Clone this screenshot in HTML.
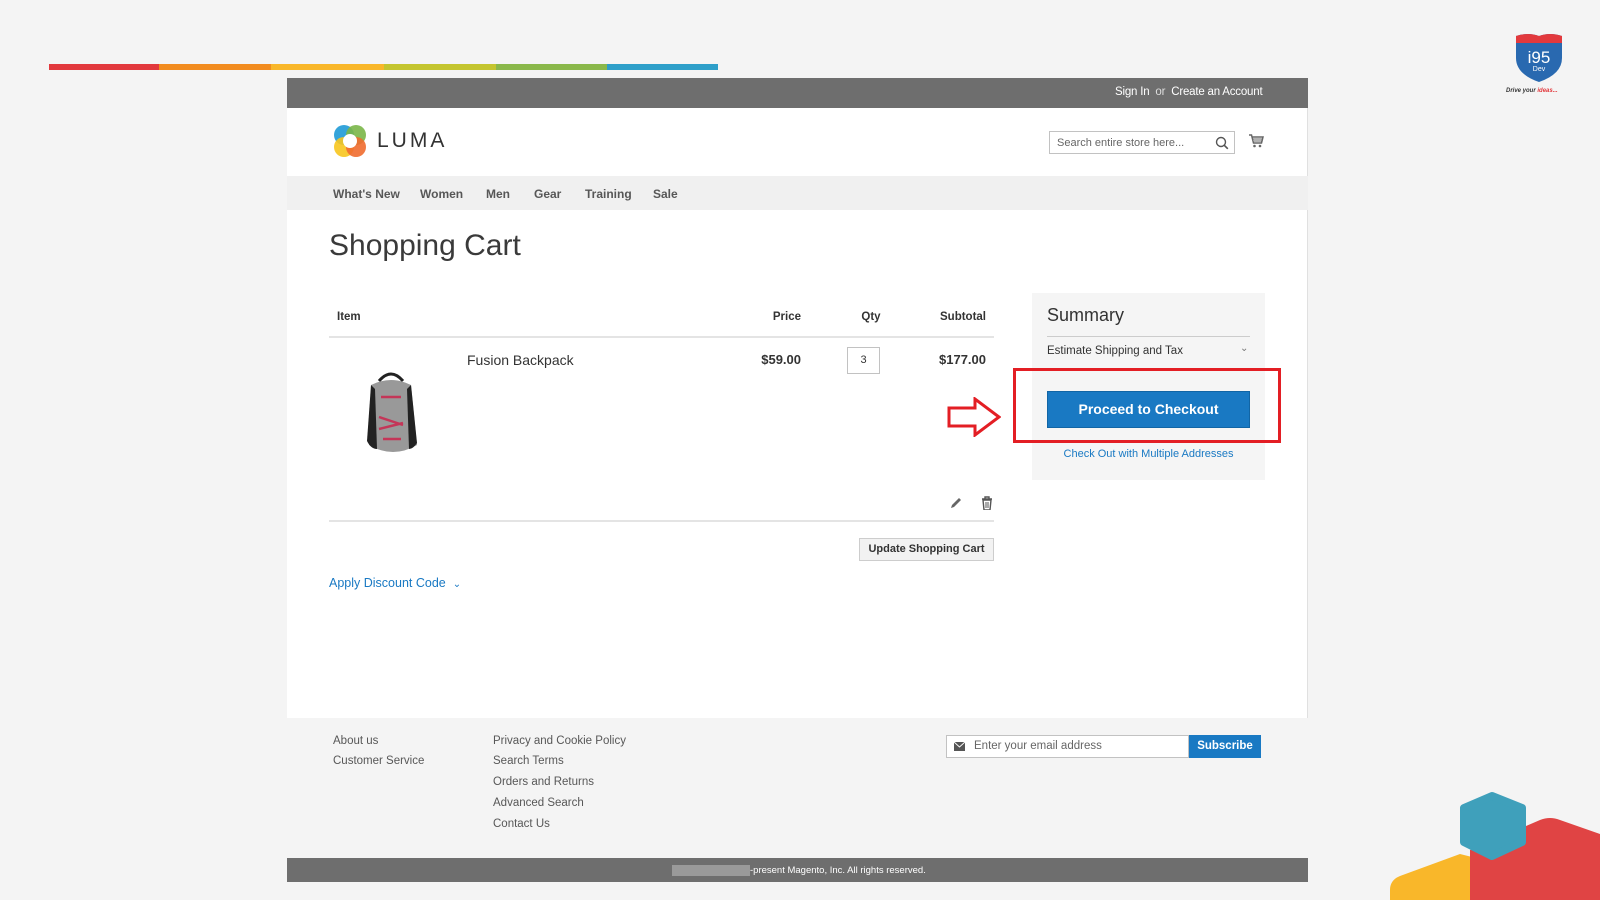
<!DOCTYPE html>
<html><head><meta charset="utf-8"><style>
*{margin:0;padding:0;box-sizing:border-box}
body{width:1600px;height:900px;background:#f4f4f4;font-family:"Liberation Sans",sans-serif;position:relative;overflow:hidden;color:#333}
.a{position:absolute}
.bar span{position:absolute;top:64px;height:6px}
.panel{left:287px;top:78px;width:1021px;height:804px;background:#fff;border-right:1px solid #e0e0e0}
.nav{font-size:12px;font-weight:bold;color:#575757;top:187px}
.ft{font-size:11.5px;color:#575757}
</style></head><body>
<div class="bar">
<span style="left:49px;width:110px;background:#e2393d"></span>
<span style="left:159px;width:112px;background:#f28c1f"></span>
<span style="left:271px;width:113px;background:#f9b72a"></span>
<span style="left:384px;width:112px;background:#c4c52f"></span>
<span style="left:496px;width:111px;background:#8ab84b"></span>
<span style="left:607px;width:111px;background:#2e9fc9"></span>
</div>
<div class="a panel"></div>
<div class="a" style="left:287px;top:78px;width:1021px;height:30px;background:#6e6e6e"></div>
<div class="a" style="left:1115px;top:86px;font-size:11.5px;color:#fff;letter-spacing:-0.2px">Sign In &nbsp;<span style="color:#ddd">or</span> &nbsp;Create an Account</div>
<svg class="a" style="left:333px;top:124px" width="34" height="34" viewBox="0 0 34 34">
<circle cx="11" cy="11" r="10" fill="#1f9ad6" opacity=".9"/><circle cx="23" cy="11" r="10" fill="#7ab648" opacity=".9"/>
<circle cx="11" cy="23" r="10" fill="#f7c51e" opacity=".9"/><circle cx="23" cy="23" r="10" fill="#ef6b2f" opacity=".9"/>
<circle cx="17" cy="17" r="7" fill="#fff"/></svg>
<div class="a" style="left:377px;top:129px;font-size:21px;letter-spacing:3px;color:#333">LUMA</div>
<div class="a" style="left:1049px;top:131px;width:186px;height:23px;border:1px solid #c2c2c2;font-size:11px;color:#666;padding:5px 7px">Search entire store here...</div>
<svg class="a" style="left:1215px;top:136px" width="14" height="14" viewBox="0 0 14 14"><circle cx="6" cy="6" r="4.5" fill="none" stroke="#555" stroke-width="1.4"/><path d="M9.3 9.3l3.5 3.5" stroke="#555" stroke-width="1.6"/></svg>
<svg class="a" style="left:1248px;top:133px" width="16" height="16" viewBox="0 0 16 16"><path d="M1 2h2.5l2 8h8l1.5-6H4" fill="none" stroke="#666" stroke-width="1.5"/><path d="M5 6h9M6 8h8" stroke="#666"/><circle cx="6.5" cy="13" r="1.3" fill="#666"/><circle cx="12" cy="13" r="1.3" fill="#666"/></svg>
<div class="a" style="left:287px;top:176px;width:1021px;height:34px;background:#f0f0f0"></div>
<div class="a nav" style="left:333px">What's New</div><div class="a nav" style="left:420px">Women</div>
<div class="a nav" style="left:486px">Men</div><div class="a nav" style="left:534px">Gear</div>
<div class="a nav" style="left:585px">Training</div><div class="a nav" style="left:653px">Sale</div>
<div class="a" style="left:329px;top:229px;font-size:30px;font-weight:300;color:#3a3a3a">Shopping Cart</div>
<div class="a" style="left:337px;top:311px;font-size:11.5px;font-weight:bold">Item</div>
<div class="a" style="left:741px;width:60px;text-align:right;top:311px;font-size:11.5px;font-weight:bold">Price</div>
<div class="a" style="left:851px;width:40px;text-align:center;top:311px;font-size:11.5px;font-weight:bold">Qty</div>
<div class="a" style="left:906px;width:80px;text-align:right;top:311px;font-size:11.5px;font-weight:bold">Subtotal</div>
<div class="a" style="left:329px;top:336px;width:665px;height:2px;background:#e4e4e4"></div>
<svg class="a" style="left:357px;top:367px" width="68" height="94" viewBox="0 0 68 94">
<path d="M22 14q12-14 24 0" fill="none" stroke="#222" stroke-width="3"/>
<path d="M14 18q20-10 40 0l6 60q-24 14-48 0z" fill="#999"/><path d="M14 18l-4 56q4 8 10 8l-2-60z" fill="#222"/><path d="M54 18l6 58q-4 6-8 6l-2-60z" fill="#222"/>
<path d="M24 30l20 0M22 50l24 8M22 62l24-6M26 72l18 0" stroke="#c43658" stroke-width="2.5" fill="none"/></svg>
<div class="a" style="left:467px;top:352px;font-size:14px;color:#333">Fusion Backpack</div>
<div class="a" style="left:721px;width:80px;text-align:right;top:352px;font-size:13px;font-weight:bold">$59.00</div>
<div class="a" style="left:847px;top:347px;width:33px;height:27px;border:1px solid #c2c2c2;font-size:11px;text-align:center;line-height:25px">3</div>
<div class="a" style="left:906px;width:80px;text-align:right;top:352px;font-size:13px;font-weight:bold">$177.00</div>
<svg class="a" style="left:949px;top:496px" width="14" height="14" viewBox="0 0 14 14"><path d="M2 12l1-3 7-7 2 2-7 7z" fill="#666"/></svg>
<svg class="a" style="left:981px;top:496px" width="12" height="14" viewBox="0 0 12 14"><path d="M1 3h10M4 3V1h4v2M2 4h8l-1 10H3z" fill="none" stroke="#555" stroke-width="1.4"/><path d="M5 6v6M7 6v6" stroke="#555"/></svg>
<div class="a" style="left:329px;top:520px;width:665px;height:2px;background:#e4e4e4"></div>
<div class="a" style="left:859px;top:538px;width:135px;height:23px;background:#f2f2f2;border:1px solid #cdcdcd;font-size:11px;font-weight:bold;color:#333;text-align:center;line-height:21px">Update Shopping Cart</div>
<div class="a" style="left:329px;top:576px;font-size:12.5px;color:#1979c3">Apply Discount Code &nbsp;<span style="font-size:10px">&#8964;</span></div>
<div class="a" style="left:1032px;top:293px;width:233px;height:187px;background:#f5f5f5"></div>
<div class="a" style="left:1047px;top:305px;font-size:18px;font-weight:300;color:#333">Summary</div>
<div class="a" style="left:1047px;top:336px;width:203px;height:1px;background:#ccc"></div>
<div class="a" style="left:1047px;top:345px;font-size:11.5px;color:#333">Estimate Shipping and Tax</div>
<div class="a" style="left:1240px;top:343px;font-size:10px;color:#777">&#8964;</div>
<div class="a" style="left:1013px;top:368px;width:268px;height:75px;border:3px solid #e31e24"></div>
<div class="a" style="left:1047px;top:391px;width:203px;height:37px;background:#1979c3;border:1px solid #1165a5;color:#fff;font-size:14px;font-weight:bold;text-align:center;line-height:35px">Proceed to Checkout</div>
<div class="a" style="left:1032px;width:233px;text-align:center;top:448px;font-size:11px;color:#1979c3">Check Out with Multiple Addresses</div>
<svg class="a" style="left:947px;top:397px" width="54" height="40" viewBox="0 0 54 40"><path d="M2 11h26V2l24 18-24 18v-9H2z" fill="#fff" stroke="#e31e24" stroke-width="3" stroke-linejoin="miter"/></svg>
<div class="a" style="left:287px;top:718px;width:1021px;height:140px;background:#f4f4f4"></div>
<div class="a ft" style="left:333px;top:735px">About us</div>
<div class="a ft" style="left:333px;top:755px">Customer Service</div>
<div class="a ft" style="left:493px;top:735px">Privacy and Cookie Policy</div>
<div class="a ft" style="left:493px;top:755px">Search Terms</div>
<div class="a ft" style="left:493px;top:776px">Orders and Returns</div>
<div class="a ft" style="left:493px;top:797px">Advanced Search</div>
<div class="a ft" style="left:493px;top:818px">Contact Us</div>
<div class="a" style="left:946px;top:735px;width:243px;height:23px;background:#fff;border:1px solid #c2c2c2;font-size:11.5px;color:#666;padding:4px 0 0 27px">Enter your email address</div>
<svg class="a" style="left:954px;top:742px" width="11" height="9" viewBox="0 0 11 9"><rect width="11" height="9" fill="#555"/><path d="M0 0l5.5 5 5.5-5" fill="none" stroke="#fff"/></svg>
<div class="a" style="left:1189px;top:735px;width:72px;height:23px;background:#1979c3;color:#fff;font-size:11.5px;font-weight:bold;text-align:center;line-height:23px">Subscribe</div>
<div class="a" style="left:287px;top:858px;width:1021px;height:24px;background:#6e6e6e"></div>
<div class="a" style="left:672px;top:865px;width:78px;height:11px;background:#9a9a9a"></div>
<div class="a" style="left:750px;top:865px;font-size:9.5px;color:#fff">-present Magento, Inc. All rights reserved.</div>
<svg class="a" style="left:1512px;top:30px" width="54" height="54" viewBox="0 0 54 54"><path d="M4 6q12-4 23 0q11-4 23 0v22q0 16-23 24Q4 44 4 28z" fill="#2969b0"/><path d="M4 6q12-4 23 0q11-4 23 0v7H4z" fill="#e2393d"/>
<text x="27" y="33" text-anchor="middle" font-family="Liberation Sans" font-size="17" fill="#fff">i95</text><text x="27" y="41" text-anchor="middle" font-family="Liberation Sans" font-size="7" fill="#fff">Dev</text></svg>
<div class="a" style="left:1506px;top:88px;font-size:6px;font-style:italic;font-weight:bold;color:#333">Drive your <span style="color:#e2393d">ideas...</span></div>
<svg class="a" style="left:1390px;top:780px" width="210" height="120" viewBox="0 0 210 120">
<path d="M0 110q0-10 10-14l60-22 40 10v36H0z" fill="#f9b72a"/>
<path d="M80 70l70-30q10-4 20 0l40 14v66H80z" fill="#e04444"/>
<path d="M74 28l28-12 30 12v34l-30 14-28-14z" fill="#3fa0bb" stroke="#3fa0bb" stroke-width="8" stroke-linejoin="round"/>
</svg>
</body></html>
